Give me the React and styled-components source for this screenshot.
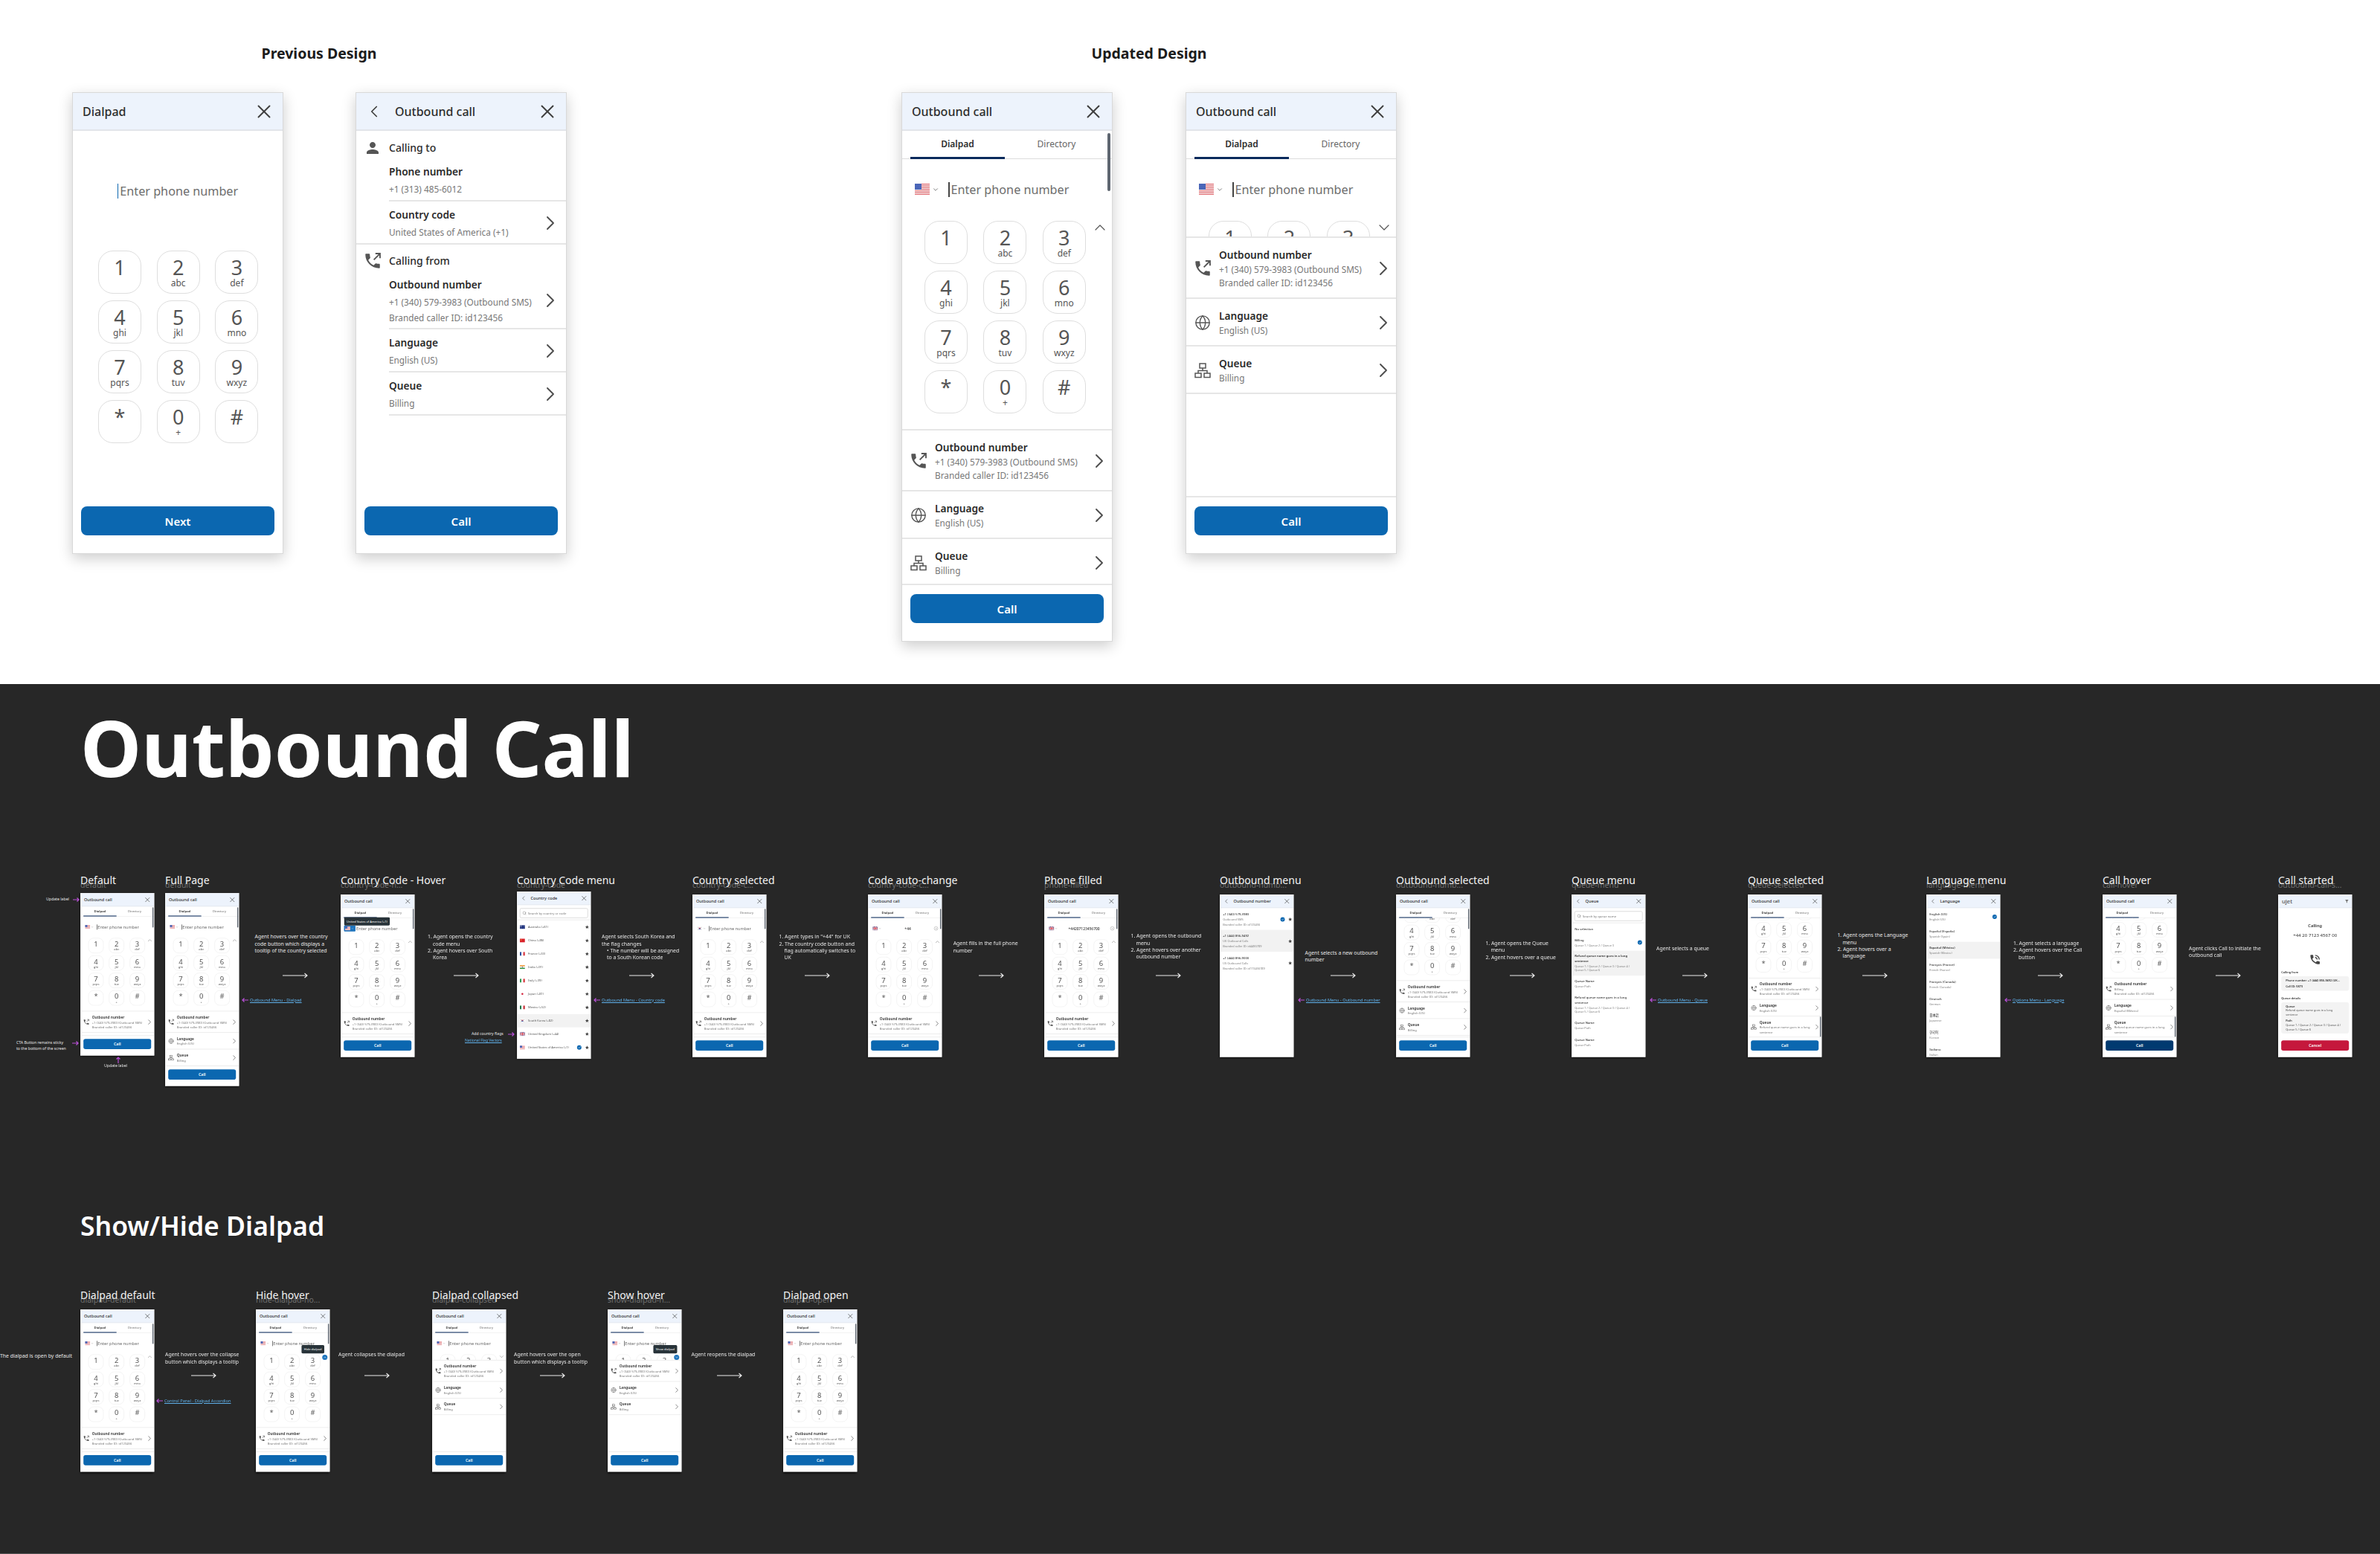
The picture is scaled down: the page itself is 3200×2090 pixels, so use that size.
import React from 'react'
import styled, { createGlobalStyle } from 'styled-components'
import { X, ChevronLeft, ChevronRight, ChevronUp, ChevronDown, Globe, Search, Check } from 'lucide-react'
import { MdPerson, MdStar, MdPhoneInTalk, MdFilterAlt } from 'react-icons/md'

const GlobalStyle = createGlobalStyle`
  html, body {
    margin: 0;
    padding: 0;
    background: #ffffff;
    font-family: "Noto Sans", "Noto Sans CJK KR", sans-serif;
  }
  body {
    overflow: hidden;
  }
`

const Canvas = styled.div`
  position: relative;
  width: 3200px;
  height: 2090px;
  overflow: hidden;
  display: flex;
  flex-direction: column;
`

const LightArea = styled.div`
  height: 920px;
  background: #ffffff;
`

const DarkArea = styled.div`
  flex: 1;
  background: #272727;
  border-bottom: 1px solid #555555;
`

const Placed = styled.div`
  position: absolute;
  left: ${({ $x }) => $x}px;
  top: ${({ $y }) => $y}px;
`

const SectionTitle = styled(Placed)`
  transform: translateX(-50%);
  font-size: 19.5px;
  line-height: 24px;
  font-weight: 700;
  color: #1c1c1c;
  white-space: nowrap;
`

const PageTitle = styled(Placed)`
  font-size: 104px;
  line-height: 130px;
  font-weight: 700;
  color: #ffffff;
  white-space: nowrap;
`

const SubTitle = styled(Placed)`
  font-size: 35.5px;
  line-height: 44px;
  font-weight: 600;
  color: #ffffff;
  white-space: nowrap;
`

const FrameLabel = styled(Placed)`
  font-size: 14px;
  line-height: 16px;
  color: #f2f2f2;
  white-space: nowrap;
`

const FrameGhost = styled(Placed)`
  font-size: 10.5px;
  line-height: 12px;
  color: #6e6e6e;
  white-space: nowrap;
`

const NoteText = styled(Placed)`
  font-size: 6.9px;
  line-height: 9.3px;
  color: #e4e4e4;
  white-space: nowrap;
`

const NoteLine = styled.div`
  padding-left: ${({ $indent }) => ($indent ? 7 : 0)}px;
`

const SmallNote = styled(NoteText)`
  font-size: 5.2px;
  line-height: 7.5px;
`

const LinkText = styled(Placed)`
  font-size: ${({ $size }) => $size || 5.7}px;
  line-height: 9px;
  color: #5fb0ea;
  text-decoration: underline;
  white-space: nowrap;
`

/* phone window */
const Panel = styled.div`
  position: relative;
  box-sizing: border-box;
  width: 284px;
  height: ${({ $h }) => $h}px;
  transform: ${({ $zoom }) => ($zoom ? `scale(${$zoom})` : 'none')};
  transform-origin: 0 0;
  display: flex;
  flex-direction: column;
  overflow: hidden;
  background: #ffffff;
  border: 1px solid #d9d9d9;
  box-shadow: ${({ $zoom }) => ($zoom ? '0 4px 8px #000000' : '0 6px 18px rgba(0, 0, 0, 0.2)')};
`

const Header = styled.div`
  flex: none;
  box-sizing: border-box;
  height: 51px;
  padding: 0 10px 0 ${({ $back }) => ($back ? 11 : 13)}px;
  display: flex;
  align-items: center;
  background: #edf3fc;
  border-bottom: 2px solid #e2e5ea;
  color: #3f3f3f;
`

const HeaderTitle = styled.div`
  flex: 1;
  font-size: 16px;
  font-weight: 500;
  color: #2e2e2e;
  padding-left: ${({ $back }) => ($back ? 15 : 0)}px;
`

const Logo = styled(HeaderTitle)`
  font-size: 22px;
  color: #555555;
`

const Tabs = styled.div`
  flex: none;
  box-sizing: border-box;
  height: 38px;
  padding: 0 11px;
  display: grid;
  grid-template-columns: 127px 127px;
  column-gap: 6px;
  border-bottom: 1px solid #dcdcdc;
`

const Tab = styled.div`
  display: flex;
  align-items: center;
  justify-content: center;
  margin-bottom: -1px;
  font-size: 12px;
  font-weight: ${({ $active }) => ($active ? 600 : 400)};
  color: ${({ $active }) => ($active ? '#2e2e2e' : '#666666')};
  border-bottom: 3px solid ${({ $active }) => ($active ? '#0a2a5c' : 'transparent')};
`

const Scrollbar = styled.div`
  position: absolute;
  right: 2px;
  top: ${({ $bottom }) => ($bottom ? 468 : 54)}px;
  width: 4px;
  height: 78px;
  border-radius: 2px;
  background: #5e6670;
`

const Body = styled.div`
  flex: 1;
  min-height: 0;
  overflow: hidden;
`

const BodyInner = styled.div`
  margin-top: ${({ $scroll }) => -($scroll || 0)}px;
`

const DialSection = styled.div`
  position: relative;
  box-sizing: border-box;
  height: ${({ $collapsed }) => ($collapsed ? 106 : 365)}px;
  overflow: hidden;
  border-bottom: 2px solid #e6e6e6;
`

const InputRow = styled.div`
  position: relative;
  box-sizing: border-box;
  height: 83px;
  padding: 0 0 2px 17px;
  display: flex;
  align-items: center;
`

const FlagButton = styled.div`
  display: flex;
  align-items: center;
  gap: 3px;
  width: 45px;
  color: #666666;
  ${({ $hover }) =>
    $hover &&
    `
    background: #1d74bd;
    color: #ffffff;
    border-radius: 3px;
    padding: 4px;
    margin: -4px 1px -4px -5px;
    width: 36px;
  `}
`

const Caret = styled.div`
  width: 1.5px;
  height: 20px;
  background: ${({ $blue }) => ($blue ? '#0b67b0' : '#444444')};
`

const Placeholder = styled.div`
  margin-left: 2px;
  font-size: 16.2px;
  color: #6d6d6d;
`

const PhoneValue = styled.div`
  flex: 1;
  padding-right: 40px;
  text-align: center;
  font-size: 14px;
  font-weight: 500;
  color: #333333;
`

const ClearIcon = styled.div`
  position: absolute;
  right: 14px;
  width: 15px;
  height: 15px;
  box-sizing: border-box;
  border: 1.5px solid #777777;
  border-radius: 50%;
  display: flex;
  align-items: center;
  justify-content: center;
  color: #777777;
`

const Keys = styled.div`
  display: grid;
  grid-template-columns: repeat(3, 58px);
  column-gap: ${({ $wide }) => ($wide ? 20.7 : 21.4)}px;
  row-gap: 9px;
  padding-left: ${({ $wide }) => ($wide ? 34 : 30)}px;
`

const Key = styled.div`
  box-sizing: border-box;
  height: 58px;
  padding-top: 8px;
  border: 1px solid #dedede;
  border-radius: 20px;
  text-align: center;
  color: #555555;
`

const KeyDigit = styled.div`
  font-size: 27px;
  line-height: 27px;
`

const KeySub = styled.div`
  margin-top: 1px;
  font-size: 12px;
  line-height: 14px;
`

const DialToggle = styled.div`
  position: absolute;
  left: 254px;
  top: 80px;
  color: #555555;
  display: flex;
`

const ToggleHover = styled.div`
  position: absolute;
  left: 254px;
  top: 84px;
  width: 20px;
  height: 20px;
  border-radius: 50%;
  background: #1d74bd;
  color: #ffffff;
  display: flex;
  align-items: center;
  justify-content: center;
`

const Tooltip = styled.div`
  position: absolute;
  left: ${({ $x }) => $x}px;
  top: ${({ $y }) => $y}px;
  z-index: 3;
  height: 32px;
  padding: 0 10px;
  display: flex;
  align-items: center;
  border-radius: 5px;
  background: #283339;
  color: #ffffff;
  font-size: 11.5px;
  white-space: nowrap;
`

const Row = styled.div`
  display: grid;
  grid-template-columns: 44px 1fr 32px;
  align-items: center;
  padding: 13px 1px 11px 0;
  border-bottom: 2px solid #e6e6e6;
`

const RowIcon = styled.div`
  height: 20px;
  display: flex;
  align-items: center;
  justify-content: center;
  color: #555555;
`

const RowLabel = styled.div`
  font-size: 13.7px;
  line-height: 20px;
  font-weight: 600;
  color: #2b2b2b;
`

const RowSub = styled.div`
  font-size: 11.8px;
  line-height: 18px;
  color: #777777;
`

const RowChevron = styled.div`
  display: flex;
  justify-content: center;
  color: #4d4d4d;
`

const Footer = styled.div`
  flex: none;
  padding: ${({ $plain }) => ($plain ? '6px' : '12px')} 11px 24px;
  border-top: ${({ $plain }) => ($plain ? 'none' : '2px solid #e6e6e6')};
`

const Button = styled.div`
  height: 39px;
  display: flex;
  align-items: center;
  justify-content: center;
  border-radius: 8px;
  background: ${({ $bg }) => $bg || '#0b67b0'};
  color: #ffffff;
  font-size: 15px;
  font-weight: 600;
`

/* previous design list */
const CallSection = styled.div`
  display: grid;
  grid-template-columns: 44px 1fr;
  align-items: center;
  padding: ${({ $first }) => ($first ? 13 : 12)}px 0 4px;
`

const CallRow = styled.div`
  display: grid;
  grid-template-columns: 1fr 32px;
  align-items: center;
  margin-left: 44px;
  padding: 6px 5px 4px 0;
  border-bottom: 2px solid #e6e6e6;
`

const CallRowFull = styled(CallRow)`
  margin-left: 0;
  padding-left: 44px;
`

const CallLabel = styled.div`
  font-size: 13.7px;
  line-height: 24px;
  font-weight: 600;
  color: #2b2b2b;
`

const CallSub = styled.div`
  font-size: 11.8px;
  line-height: ${({ $lh }) => $lh || 22}px;
  color: #777777;
`

const HeadingLabel = styled.div`
  font-size: 14px;
  line-height: 20px;
  font-weight: 500;
  color: #2b2b2b;
`

/* menus */
const SearchSection = styled.div`
  padding: 12px 10px 5px;
  border-bottom: 4px solid #f0f0f0;
`

const SearchBox = styled.div`
  box-sizing: border-box;
  height: 38px;
  padding: 0 8px;
  display: flex;
  align-items: center;
  gap: 6px;
  border: 2px solid #cfcfcf;
  border-radius: 6px;
  font-size: 12px;
  color: #757575;
`

const MenuRow = styled.div`
  display: grid;
  grid-template-columns: 1fr 24px 26px;
  align-items: center;
  padding: ${({ $pad }) => $pad || '13px 3px 11px 11px'};
  background: ${({ $hover }) => ($hover ? '#f2f2f2' : 'transparent')};
`

const CountryRow = styled.div`
  display: grid;
  grid-template-columns: 32px 1fr 24px 28px;
  align-items: center;
  min-height: 51.4px;
  padding-left: 10px;
  background: ${({ $hover }) => ($hover ? '#f2f2f2' : 'transparent')};
`

const CountryName = styled.div`
  font-size: 11.5px;
  line-height: 20px;
  color: #555555;
`

const MenuLabel = styled.div`
  font-size: 12px;
  line-height: 21px;
  font-weight: ${({ $strong }) => ($strong ? 600 : 500)};
  color: #333333;
`

const MenuSub = styled.div`
  font-size: 11px;
  line-height: ${({ $lh }) => $lh || 20}px;
  color: #808080;
`

const CheckBadge = styled.div`
  width: 17px;
  height: 17px;
  border-radius: 50%;
  background: #0b67b0;
  color: #ffffff;
  display: flex;
  align-items: center;
  justify-content: center;
`

const StarSlot = styled.div`
  display: flex;
  justify-content: center;
  color: #444444;
`

/* call started */
const CallingHead = styled.div`
  padding-top: 56px;
  text-align: center;
  color: #333333;
`

const CallingTitle = styled.div`
  font-size: 16px;
  line-height: 24px;
  font-weight: 600;
`

const CallingNumber = styled.div`
  margin-top: 12px;
  font-size: 17.5px;
  line-height: 24px;
`

const RingIcon = styled.div`
  margin-top: 58px;
  display: flex;
  justify-content: center;
  color: #444444;
`

const BoxTitle = styled.div`
  margin: ${({ $top }) => $top}px 0 8px 11px;
  font-size: 11px;
  line-height: 16px;
  font-weight: 600;
  color: #333333;
`

const InfoBox = styled.div`
  margin: 0 11px;
  padding: 8px 17px 8px;
  border-radius: 8px;
  background: #f3f3f3;
  font-size: 11px;
  line-height: 16px;
  color: #555555;
`

const InfoStrong = styled.div`
  font-weight: 600;
  color: #333333;
  margin-top: ${({ $top }) => $top || 0}px;
  white-space: nowrap;
`

const InputCenter = styled.div`
  height: 161px;
  display: flex;
  align-items: center;
  justify-content: center;
`

const PhoneOut = ({ size = 26 }) => (
  <svg width={size} height={size} viewBox="0 0 24 24">
    <path
      fill="currentColor"
      d="M6.62 10.79c1.44 2.83 3.76 5.14 6.59 6.59l2.2-2.2c.27-.27.67-.36 1.02-.24 1.12.37 2.33.57 3.57.57.55 0 1 .45 1 1V20c0 .55-.45 1-1 1-9.39 0-17-7.61-17-17 0-.55.45-1 1-1h3.5c.55 0 1 .45 1 1 0 1.25.2 2.45.57 3.57.11.35.03.74-.25 1.02l-2.2 2.2z"
    />
    <path fill="none" stroke="currentColor" strokeWidth="1.7" d="M13.5 10.5L21 3M15.5 2.8h5.7v5.7" />
  </svg>
)

const QueueIcon = () => (
  <svg width="24" height="24" viewBox="0 0 24 24" fill="none" stroke="currentColor" strokeWidth="1.5">
    <rect x="8" y="3" width="8" height="6" />
    <rect x="2" y="16" width="8" height="5.5" />
    <rect x="14" y="16" width="8" height="5.5" />
    <path d="M12 9v3.5M6 16v-3.5h12V16" />
  </svg>
)

const Flag = ({ code }) => {
  const stripes = {
    fr: ['#2b4ea0', '#ffffff', '#d9363e'],
    it: ['#2f9a55', '#ffffff', '#d9363e'],
    mx: ['#1f7a4d', '#ffffff', '#c8323a'],
  }
  return (
    <svg width="20" height="15" viewBox="0 0 20 15">
      {code === 'us' && (
        <>
          <rect width="20" height="15" fill="#f6f6f6" />
          {[0, 2, 4, 6, 8, 10, 12].map((i) => (
            <rect key={i} y={i * 1.16} width="20" height="1.16" fill="#e2686e" />
          ))}
          <rect width="9" height="8" fill="#4a66b8" />
        </>
      )}
      {stripes[code] &&
        stripes[code].map((c, i) => <rect key={c} x={(i * 20) / 3} width="6.7" height="15" fill={c} />)}
      {code === 'au' && (
        <>
          <rect width="20" height="15" fill="#1c2f7c" />
          <path d="M0 0L9 7M9 0L0 7" stroke="#e9e9e9" strokeWidth="1.4" />
          <circle cx="15" cy="5" r="1" fill="#fff" />
          <circle cx="14" cy="11" r="1" fill="#fff" />
          <circle cx="5" cy="11" r="1.4" fill="#fff" />
        </>
      )}
      {code === 'cn' && (
        <>
          <rect width="20" height="15" fill="#d8202a" />
          <circle cx="5" cy="5" r="2" fill="#f6d13c" />
        </>
      )}
      {code === 'in' && (
        <>
          <rect width="20" height="5" fill="#f09a3e" />
          <rect y="5" width="20" height="5" fill="#f7f7f7" />
          <rect y="10" width="20" height="5" fill="#2b8f3c" />
          <circle cx="10" cy="7.5" r="1.6" fill="#27348b" />
        </>
      )}
      {code === 'jp' && (
        <>
          <rect width="20" height="15" fill="#ffffff" />
          <circle cx="10" cy="7.5" r="3.6" fill="#d3203a" />
        </>
      )}
      {code === 'kr' && (
        <>
          <rect width="20" height="15" fill="#ffffff" />
          <path d="M3 3l3 2M3 12l3-2M17 3l-3 2M17 12l-3-2" stroke="#333" strokeWidth="1.2" />
          <path d="M6.5 7.5a3.5 3.5 0 0 1 7 0z" fill="#cd2e3a" />
          <path d="M6.5 7.5a3.5 3.5 0 0 0 7 0z" fill="#24479c" />
        </>
      )}
      {code === 'uk' && (
        <>
          <rect width="20" height="15" fill="#24408e" />
          <path d="M0 0L20 15M20 0L0 15" stroke="#ffffff" strokeWidth="3" />
          <path d="M0 0L20 15M20 0L0 15" stroke="#cf2a3a" strokeWidth="1.2" />
          <path d="M10 0V15M0 7.5H20" stroke="#ffffff" strokeWidth="4.4" />
          <path d="M10 0V15M0 7.5H20" stroke="#cf2a3a" strokeWidth="2.4" />
        </>
      )}
    </svg>
  )
}

const HeaderBar = ({ title, back }) => (
  <Header $back={back}>
    {back && <ChevronLeft size={26} strokeWidth={1.6} />}
    <HeaderTitle $back={back}>{title}</HeaderTitle>
    <X size={30} strokeWidth={1.5} />
  </Header>
)

const TabBar = () => (
  <Tabs>
    <Tab $active>Dialpad</Tab>
    <Tab>Directory</Tab>
  </Tabs>
)

const KEYS = [
  ['1', ''],
  ['2', 'abc'],
  ['3', 'def'],
  ['4', 'ghi'],
  ['5', 'jkl'],
  ['6', 'mno'],
  ['7', 'pqrs'],
  ['8', 'tuv'],
  ['9', 'wxyz'],
  ['*', ''],
  ['0', '+'],
  ['#', ''],
]

const KeyGrid = ({ wide }) => (
  <Keys $wide={wide}>
    {KEYS.map(([digit, sub]) => (
      <Key key={digit}>
        <KeyDigit>{digit}</KeyDigit>
        {sub && <KeySub>{sub}</KeySub>}
      </Key>
    ))}
  </Keys>
)

const OptionRow = ({ icon, label, lines }) => (
  <Row>
    <RowIcon>{icon}</RowIcon>
    <div>
      <RowLabel>{label}</RowLabel>
      {lines.map((line) => (
        <RowSub key={line}>{line}</RowSub>
      ))}
    </div>
    <RowChevron>
      <ChevronRight size={32} strokeWidth={1.4} />
    </RowChevron>
  </Row>
)

const DialScreen = ({
  h,
  zoom,
  scroll,
  collapsed,
  flag = 'us',
  value,
  flagHover,
  flagTip,
  toggleTip,
  thumbBottom,
  outbound = ['+1 (340) 579-3983 (Outbound SMS)', 'Branded caller ID: id123456'],
  language = 'English (US)',
  queue = ['Billing'],
  buttonBg,
}) => (
  <Panel $h={h} $zoom={zoom}>
    <HeaderBar title="Outbound call" />
    <TabBar />
    {!collapsed && <Scrollbar $bottom={thumbBottom} />}
    {flagTip && (
      <Tooltip $x={12} $y={86}>
        United States of America (+1)
      </Tooltip>
    )}
    {toggleTip && (
      <Tooltip $x={174} $y={136}>
        {toggleTip}
      </Tooltip>
    )}
    <Body>
      <BodyInner $scroll={scroll}>
        <DialSection $collapsed={collapsed}>
          <InputRow>
            <FlagButton $hover={flagHover}>
              <Flag code={flag} />
              <ChevronDown size={10} strokeWidth={2} />
            </FlagButton>
            {value ? (
              <>
                <PhoneValue>{value}</PhoneValue>
                <ClearIcon>
                  <X size={10} strokeWidth={2} />
                </ClearIcon>
              </>
            ) : (
              <>
                {!flagHover && <Caret />}
                <Placeholder>Enter phone number</Placeholder>
              </>
            )}
          </InputRow>
          <KeyGrid />
          {toggleTip ? (
            <ToggleHover>
              {collapsed ? <ChevronDown size={15} strokeWidth={2.4} /> : <ChevronUp size={15} strokeWidth={2.4} />}
            </ToggleHover>
          ) : (
            <DialToggle>
              {collapsed ? <ChevronDown size={24} strokeWidth={1.2} /> : <ChevronUp size={24} strokeWidth={1.2} />}
            </DialToggle>
          )}
        </DialSection>
        <OptionRow icon={<PhoneOut />} label="Outbound number" lines={outbound} />
        <OptionRow icon={<Globe size={22} strokeWidth={1.5} />} label="Language" lines={[language]} />
        <OptionRow icon={<QueueIcon />} label="Queue" lines={queue} />
      </BodyInner>
    </Body>
    <Footer>
      <Button $bg={buttonBg}>Call</Button>
    </Footer>
  </Panel>
)

const PrevDialpad = () => (
  <Panel $h={621}>
    <HeaderBar title="Dialpad" />
    <Body>
      <InputCenter>
        <Caret $blue />
        <Placeholder>Enter phone number</Placeholder>
      </InputCenter>
      <KeyGrid wide />
    </Body>
    <Footer $plain>
      <Button>Next</Button>
    </Footer>
  </Panel>
)

const RowArrow = () => (
  <RowChevron>
    <ChevronRight size={32} strokeWidth={1.4} />
  </RowChevron>
)

const PrevOutbound = () => (
  <Panel $h={621}>
    <HeaderBar title="Outbound call" back />
    <Body>
      <CallSection $first>
        <RowIcon>
          <MdPerson size={24} />
        </RowIcon>
        <HeadingLabel>Calling to</HeadingLabel>
      </CallSection>
      <CallRow>
        <div>
          <CallLabel>Phone number</CallLabel>
          <CallSub>+1 (313) 485-6012</CallSub>
        </div>
      </CallRow>
      <CallRowFull>
        <div>
          <CallLabel>Country code</CallLabel>
          <CallSub>United States of America (+1)</CallSub>
        </div>
        <RowArrow />
      </CallRowFull>
      <CallSection>
        <RowIcon>
          <PhoneOut />
        </RowIcon>
        <HeadingLabel>Calling from</HeadingLabel>
      </CallSection>
      <CallRow>
        <div>
          <CallLabel>Outbound number</CallLabel>
          <CallSub>+1 (340) 579-3983 (Outbound SMS)</CallSub>
          <CallSub $lh={20}>Branded caller ID: id123456</CallSub>
        </div>
        <RowArrow />
      </CallRow>
      <CallRow>
        <div>
          <CallLabel>Language</CallLabel>
          <CallSub>English (US)</CallSub>
        </div>
        <RowArrow />
      </CallRow>
      <CallRow>
        <div>
          <CallLabel>Queue</CallLabel>
          <CallSub>Billing</CallSub>
        </div>
        <RowArrow />
      </CallRow>
    </Body>
    <Footer $plain>
      <Button>Call</Button>
    </Footer>
  </Panel>
)

const Selected = () => (
  <CheckBadge>
    <Check size={12} strokeWidth={3} />
  </CheckBadge>
)

const COUNTRIES = [
  ['au', 'Australia (+61)'],
  ['cn', 'China (+86)'],
  ['fr', 'France (+33)'],
  ['in', 'India (+91)'],
  ['it', 'Italy (+39)'],
  ['jp', 'Japan (+81)'],
  ['mx', 'Mexico (+52)'],
  ['kr', 'South Korea (+82)'],
  ['uk', 'United Kingdom (+44)'],
  ['us', 'United States of America (+1)'],
]

const CountryMenu = ({ zoom }) => (
  <Panel $h={643} $zoom={zoom}>
    <HeaderBar title="Country code" back />
    <SearchSection>
      <SearchBox>
        <Search size={16} />
        Search by country or code
      </SearchBox>
    </SearchSection>
    <Body>
      {COUNTRIES.map(([code, name]) => (
        <CountryRow key={code} $hover={code === 'kr'}>
          <Flag code={code} />
          <CountryName>{name}</CountryName>
          <div>{code === 'us' && <Selected />}</div>
          <StarSlot>
            <MdStar size={17} />
          </StarSlot>
        </CountryRow>
      ))}
    </Body>
  </Panel>
)

const OUTBOUND = [
  ['+1 (340) 579-3983', 'Outbound SMS', 'Branded caller ID: id123456', true],
  ['+1 (444) 856-9492', 'UK Outbound Calls', 'Branded caller ID: id4490789'],
  ['+1 (444) 856-9000', 'US Outbound Calls', 'Branded caller ID: id113456789'],
]

const OutboundMenu = ({ zoom }) => (
  <Panel $h={625} $zoom={zoom}>
    <HeaderBar title="Outbound number" back />
    <Body>
      {OUTBOUND.map(([number, name, caller, checked], i) => (
        <MenuRow key={number} $hover={i === 1} $pad="13px 0 10px 11px">
          <div>
            <MenuLabel>{number}</MenuLabel>
            <MenuSub>{name}</MenuSub>
            <MenuSub>{caller}</MenuSub>
          </div>
          <div>{checked && <Selected />}</div>
          <StarSlot>
            <MdStar size={17} />
          </StarSlot>
        </MenuRow>
      ))}
    </Body>
  </Panel>
)

const LONG_PATH = ['Queue 1 / Queue 2 / Queue 3 / Queue 4 /', 'Queue 5 / Queue 6']

const QueueNameRow = () => (
  <MenuRow $pad="11px 3px 12px 11px">
    <div>
      <MenuLabel>Queue Name</MenuLabel>
      <MenuSub>Queue Path</MenuSub>
    </div>
  </MenuRow>
)

const QueueMenu = ({ zoom }) => (
  <Panel $h={625} $zoom={zoom}>
    <HeaderBar title="Queue" back />
    <SearchSection>
      <SearchBox>
        <Search size={16} />
        Search by queue name
      </SearchBox>
    </SearchSection>
    <Body>
      <MenuRow $pad="11px 3px 10px 11px">
        <MenuLabel>No selection</MenuLabel>
      </MenuRow>
      <MenuRow $pad="11px 3px 11px 11px">
        <div>
          <MenuLabel>Billing</MenuLabel>
          <MenuSub>Queue 1 / Queue 2 / Queue 3</MenuSub>
        </div>
        <div />
        <Selected />
      </MenuRow>
      {[true, false].map((hover) => (
        <React.Fragment key={String(hover)}>
          <MenuRow $hover={hover} $pad="9px 3px 13px 11px">
            <div>
              <MenuLabel $strong={hover}>
                Refund queue name goes in a long
                <br />
                sentence
              </MenuLabel>
              {LONG_PATH.map((line) => (
                <MenuSub key={line} $lh={16}>
                  {line}
                </MenuSub>
              ))}
            </div>
          </MenuRow>
          <QueueNameRow />
        </React.Fragment>
      ))}
      <QueueNameRow />
    </Body>
  </Panel>
)

const LANGUAGES = [
  ['English (US)', 'English (US)'],
  ['Español (España)', 'Spanish (Spain)'],
  ['Español (México)', 'Spanish (Mexico)'],
  ['Français (France)', 'French (France)'],
  ['Français (Canada)', 'French (Canada)'],
  ['Deutsch', 'German'],
  ['日本語', 'Japanese'],
  ['한국어', 'Korean'],
  ['Italiano', 'Italian'],
]

const LanguageMenu = ({ zoom }) => (
  <Panel $h={625} $zoom={zoom}>
    <HeaderBar title="Language" back />
    <Body>
      {LANGUAGES.map(([name, sub], i) => (
        <MenuRow key={name} $hover={i === 2}>
          <div>
            <MenuLabel $strong={i === 2}>{name}</MenuLabel>
            <MenuSub>{sub}</MenuSub>
          </div>
          <div />
          <div>{i === 0 && <Selected />}</div>
        </MenuRow>
      ))}
    </Body>
  </Panel>
)

const CallStarted = ({ zoom }) => (
  <Panel $h={625} $zoom={zoom}>
    <Header>
      <Logo>ujet</Logo>
      <MdFilterAlt size={18} color="#777777" />
    </Header>
    <Body>
      <CallingHead>
        <CallingTitle>Calling</CallingTitle>
        <CallingNumber>+44 20 7123 4567 00</CallingNumber>
      </CallingHead>
      <RingIcon>
        <MdPhoneInTalk size={48} />
      </RingIcon>
      <BoxTitle $top={16}>Calling from</BoxTitle>
      <InfoBox>
        <InfoStrong>Phone number: +1 (444) 856-9492 (UK...</InfoStrong>
        <InfoStrong $top={8}>Call ID: 5873</InfoStrong>
      </InfoBox>
      <BoxTitle $top={20}>Queue details</BoxTitle>
      <InfoBox>
        <InfoStrong>Queue</InfoStrong>
        Refund queue name goes in a long
        <br />
        sentence
        <InfoStrong $top={8}>Path</InfoStrong>
        Queue 1 / Queue 2 / Queue 3 / Queue 4 /
        <br />
        Queue 5 / Queue 6
      </InfoBox>
    </Body>
    <Footer $plain>
      <Button $bg="#c5183c">Cancel</Button>
    </Footer>
  </Panel>
)

const Arrow = ({ x, y }) => (
  <Placed $x={x} $y={y - 4}>
    <svg width="34" height="8" viewBox="0 0 34 8" style={{ display: 'block' }}>
      <path d="M0 4H33M29.5 1l3.5 3-3.5 3" fill="none" stroke="#eeeeee" strokeWidth="1.1" />
    </svg>
  </Placed>
)

const PurpleArrow = ({ x, y, up, left }) => (
  <Placed $x={x} $y={y}>
    <svg width="10" height="10" viewBox="0 0 10 10" style={{ display: 'block' }}>
      <path
        d={up ? 'M5 9V1M2.5 3.5L5 1l2.5 2.5' : left ? 'M9 5H1M3.5 2.5L1 5l2.5 2.5' : 'M1 5H9M6.5 2.5L9 5 6.5 7.5'}
        fill="none"
        stroke="#b950d8"
        strokeWidth="1.2"
      />
    </svg>
  </Placed>
)

const Note = ({ x, y, lines }) => (
  <NoteText $x={x} $y={y - 4.6}>
    {lines.map((line) =>
      line[0] === '>' ? (
        <NoteLine key={line} $indent>
          {line.slice(1)}
        </NoteLine>
      ) : (
        <NoteLine key={line}>{line}</NoteLine>
      )
    )}
  </NoteText>
)

const Link = ({ x, y, children }) => (
  <>
    <PurpleArrow x={x} y={y - 5} left />
    <LinkText $x={x + 11} $y={y - 4.5}>
      {children}
    </LinkText>
  </>
)

const LABELS = [
  [108, 1176, 'Default', 'default'],
  [222, 1176, 'Full Page', 'default'],
  [458, 1176, 'Country Code - Hover', 'country-code-h...'],
  [695, 1176, 'Country Code menu', 'country-code'],
  [931, 1176, 'Country selected', 'country-code-c...'],
  [1167, 1176, 'Code auto-change', 'country-code-c...'],
  [1404, 1176, 'Phone filled', 'phone-filled'],
  [1640, 1176, 'Outbound menu', 'outbound-numb...'],
  [1877, 1176, 'Outbound selected', 'outbound-numb...'],
  [2113, 1176, 'Queue menu', 'queue-menu'],
  [2350, 1176, 'Queue selected', 'queue-selected'],
  [2590, 1176, 'Language menu', 'language-menu'],
  [2827, 1176, 'Call hover', 'call-hover'],
  [3063, 1176, 'Call started', 'outbound-call-s...'],
  [108, 1734, 'Dialpad default', 'dialpad-default'],
  [344, 1734, 'Hide hover', 'hide-dialpad-ho...'],
  [581, 1734, 'Dialpad collapsed', 'dialpad-collapsed'],
  [817, 1734, 'Show hover', 'show-dialpad-h...'],
  [1053, 1734, 'Dialpad open', 'dialpad-open'],
]

const ARROWS = [
  [380, 1312], [610, 1312], [846, 1312], [1082, 1312], [1316, 1312], [1554, 1312],
  [1789, 1312], [2030, 1312], [2262, 1312], [2504, 1312], [2740, 1312], [2979, 1312],
  [257, 1850], [490, 1850], [726, 1850], [964, 1850],
]

const NOTES = [
  [342.5, 1260, ['Agent hovers over the country', 'code button which displays a', 'tooltip of the country selected']],
  [575, 1260, ['1. Agent opens the country', '>code menu', '2. Agent hovers over South', '>Korea']],
  [809, 1260, ['Agent selects South Korea and', 'the flag changes', '>•  The number will be assigned', '>   to a South Korean code']],
  [1047.5, 1260, ['1. Agent types in "+44" for UK', '2. The country code button and', '>flag automatically switches to', '>UK']],
  [1281.7, 1269, ['Agent fills in the full phone', 'number']],
  [1520.5, 1259, ['1. Agent opens the outbound', '>menu', '2. Agent hovers over another', '>outbound number']],
  [1754.6, 1281.7, ['Agent selects a new outbound', 'number']],
  [1997.4, 1268.7, ['1. Agent opens the Queue', '>menu', '2. Agent hovers over a queue']],
  [2227, 1275.7, ['Agent selects a queue']],
  [2470.4, 1258, ['1. Agent opens the Language', '>menu', '2. Agent hovers over a', '>language']],
  [2707, 1268.7, ['1. Agent selects a language', '2. Agent hovers over the Call', '>button']],
  [2943, 1275.7, ['Agent clicks Call to initiate the', 'outbound call']],
  [0, 1824, ['The dialpad is open by default']],
  [222, 1822, ['Agent hovers over the collapse', 'button which displays a tooltip']],
  [455, 1822, ['Agent collapses the dialpad']],
  [691, 1822, ['Agent hovers over the open', 'button which displays a tooltip']],
  [929.6, 1822, ['Agent reopens the dialpad']],
]

const LINKS = [
  [325, 1345, 'Outbound Menu - Dialpad'],
  [798, 1345, 'Outbound Menu - Country code'],
  [1745, 1345, 'Outbound Menu - Outbound number'],
  [2218, 1345, 'Outbound Menu - Queue'],
  [2695, 1345, 'Options Menu - Language'],
  [210, 1884, 'Control Panel - Dialpad Accordion'],
]

const Z = 0.35
const UK_OUT = ['+1 (340) 579-3983 (Outbound SMS)', 'Branded caller ID: id123456']
const LONG_QUEUE = ['Refund queue name goes in a long', 'sentence']

export default function App() {
  return (
    <Canvas>
      <GlobalStyle />
      <LightArea />
      <DarkArea />

      <SectionTitle $x={429} $y={60}>Previous Design</SectionTitle>
      <SectionTitle $x={1545} $y={60}>Updated Design</SectionTitle>

      <Placed $x={97} $y={124}><PrevDialpad /></Placed>
      <Placed $x={478} $y={124}><PrevOutbound /></Placed>
      <Placed $x={1212} $y={124}><DialScreen h={739} /></Placed>
      <Placed $x={1594} $y={124}><DialScreen h={621} collapsed /></Placed>

      <PageTitle $x={108} $y={940}>Outbound Call</PageTitle>
      <SubTitle $x={108} $y={1626}>Show/Hide Dialpad</SubTitle>

      {LABELS.map(([x, y, label, ghost]) => (
        <React.Fragment key={label}>
          <FrameGhost $x={x} $y={y + 8}>{ghost}</FrameGhost>
          <FrameLabel $x={x} $y={y}>{label}</FrameLabel>
        </React.Fragment>
      ))}

      <Placed $x={108} $y={1201}><DialScreen h={625} zoom={Z} /></Placed>
      <Placed $x={222} $y={1201}><DialScreen h={742} zoom={Z} /></Placed>
      <Placed $x={458} $y={1203}><DialScreen h={625} zoom={Z} flagHover flagTip /></Placed>
      <Placed $x={695} $y={1199}><CountryMenu zoom={Z} /></Placed>
      <Placed $x={931} $y={1203}><DialScreen h={625} zoom={Z} flag="kr" /></Placed>
      <Placed $x={1167} $y={1203}><DialScreen h={625} zoom={Z} flag="uk" value="+44" /></Placed>
      <Placed $x={1404} $y={1203}><DialScreen h={625} zoom={Z} flag="uk" value="+44207123456700" /></Placed>
      <Placed $x={1640} $y={1203}><OutboundMenu zoom={Z} /></Placed>
      <Placed $x={1877} $y={1203}>
        <DialScreen h={625} zoom={Z} flag="uk" value="+44207123456700" scroll={123} outbound={UK_OUT} />
      </Placed>
      <Placed $x={2113} $y={1203}><QueueMenu zoom={Z} /></Placed>
      <Placed $x={2350} $y={1203}>
        <DialScreen h={625} zoom={Z} flag="uk" value="+44207123456700" scroll={133} thumbBottom queue={LONG_QUEUE} />
      </Placed>
      <Placed $x={2590} $y={1203}><LanguageMenu zoom={Z} /></Placed>
      <Placed $x={2827} $y={1203}>
        <DialScreen
          h={625}
          zoom={Z}
          flag="uk"
          value="+44207123456700"
          scroll={133}
          thumbBottom
          outbound={['Billing', 'Branded caller ID: id123456']}
          language="Español (México)"
          queue={LONG_QUEUE}
          buttonBg="#003a70"
        />
      </Placed>
      <Placed $x={3063} $y={1203}><CallStarted zoom={Z} /></Placed>

      <Placed $x={108} $y={1761}><DialScreen h={624} zoom={Z} /></Placed>
      <Placed $x={344} $y={1761}><DialScreen h={624} zoom={Z} toggleTip="Hide dialpad" /></Placed>
      <Placed $x={581} $y={1761}><DialScreen h={624} zoom={Z} collapsed /></Placed>
      <Placed $x={817} $y={1761}><DialScreen h={624} zoom={Z} collapsed toggleTip="Show dialpad" /></Placed>
      <Placed $x={1053} $y={1761}><DialScreen h={624} zoom={Z} /></Placed>

      {ARROWS.map(([x, y]) => (
        <Arrow key={`${x}-${y}`} x={x} y={y} />
      ))}
      {NOTES.map(([x, y, lines]) => (
        <Note key={`${x}-${y}`} x={x} y={y} lines={lines} />
      ))}
      {LINKS.map(([x, y, text]) => (
        <Link key={text} x={x} y={y}>{text}</Link>
      ))}

      <SmallNote $x={62} $y={1206}>Update label</SmallNote>
      <PurpleArrow x={97} y={1205} />
      <SmallNote $x={22} $y={1399}>CTA Button remains sticky<br />to the bottom of the screen</SmallNote>
      <PurpleArrow x={96} y={1398} />
      <PurpleArrow x={154} y={1421} up />
      <SmallNote $x={140} $y={1430}>Update label</SmallNote>
      <SmallNote $x={634} $y={1387}>Add country flags</SmallNote>
      <PurpleArrow x={682} y={1386} />
      <LinkText $x={625} $y={1395} $size={5}>National Flag Vectors</LinkText>
    </Canvas>
  )
}
